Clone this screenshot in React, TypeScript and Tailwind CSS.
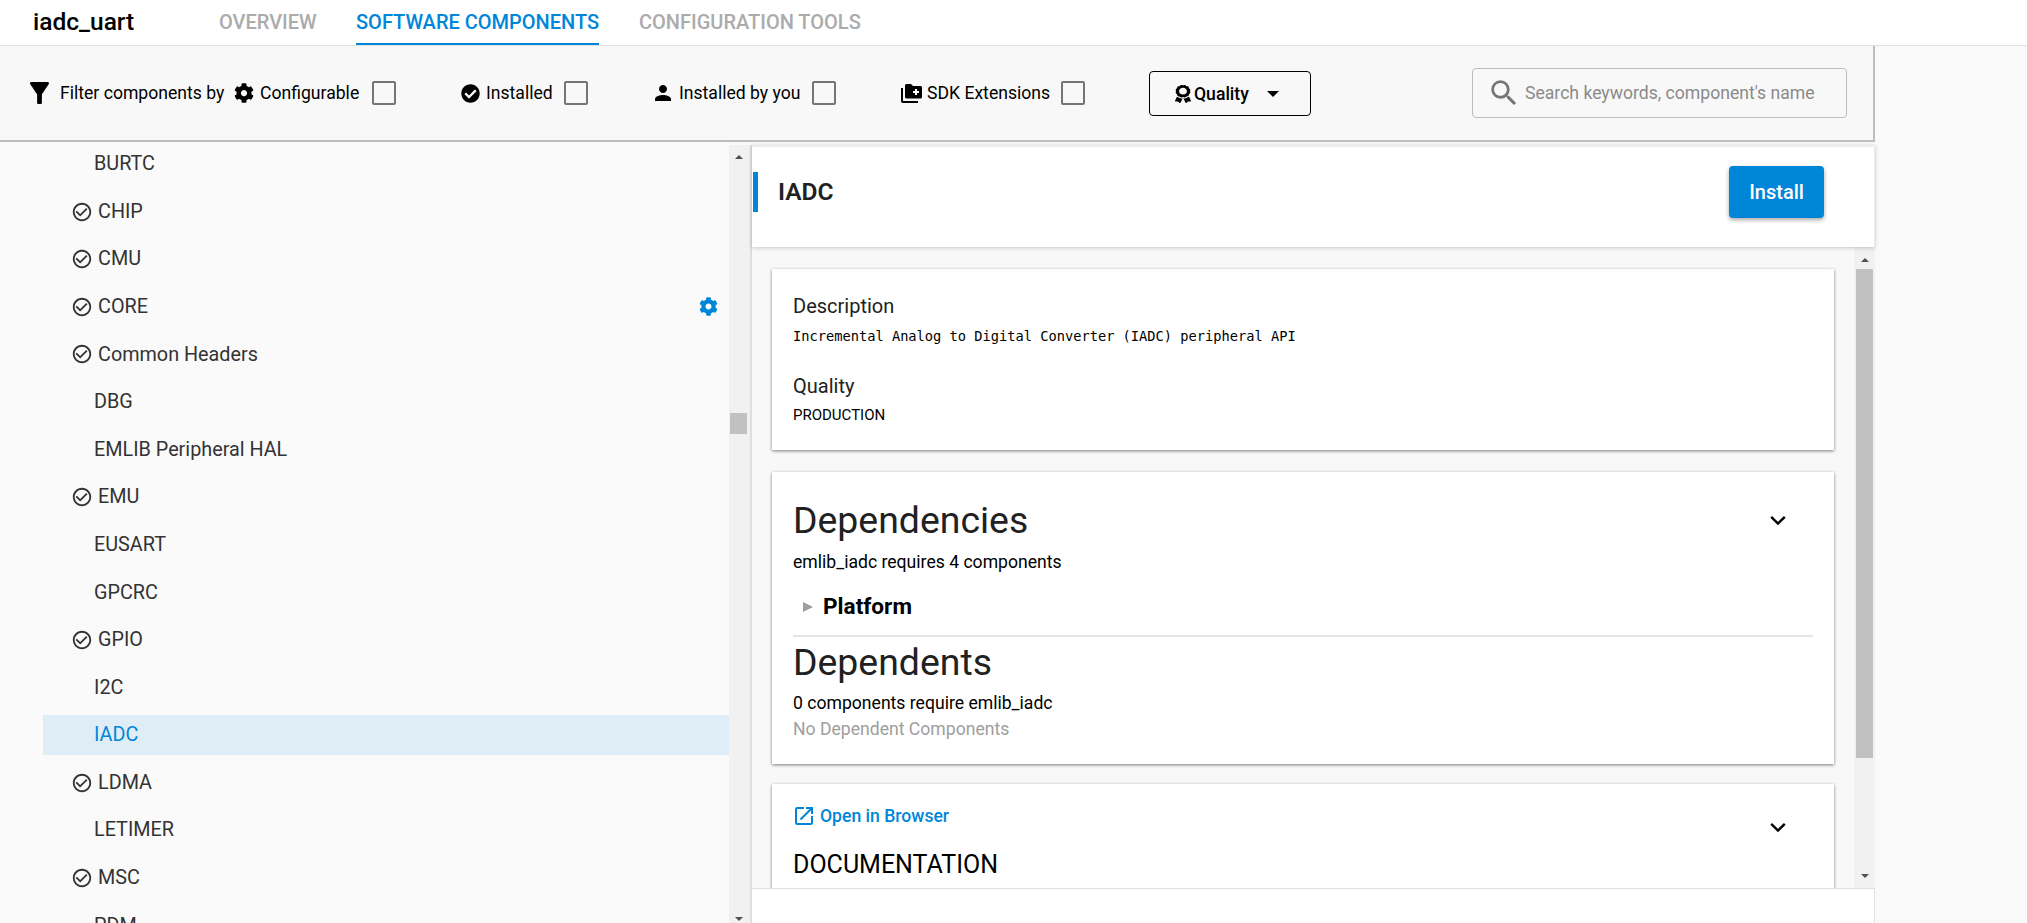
import React from "react";
import { MdPerson, MdSearch, MdCheckCircleOutline, MdOpenInNew } from "react-icons/md";
import { FaCog, FaCheckCircle, FaAward } from "react-icons/fa";

const rows: { name: string; check?: boolean; gear?: boolean; active?: boolean }[] = [
  { name: "BURTC" },
  { name: "CHIP", check: true },
  { name: "CMU", check: true },
  { name: "CORE", check: true, gear: true },
  { name: "Common Headers", check: true },
  { name: "DBG" },
  { name: "EMLIB Peripheral HAL" },
  { name: "EMU", check: true },
  { name: "EUSART" },
  { name: "GPCRC" },
  { name: "GPIO", check: true },
  { name: "I2C" },
  { name: "IADC", active: true },
  { name: "LDMA", check: true },
  { name: "LETIMER" },
  { name: "MSC", check: true },
  { name: "PDM" },
];

function Box() {
  return <span className="block w-[24px] h-[24px] border-2 border-[#757575] rounded-[2px] shrink-0" />;
}

function ArrowUp() {
  return <span className="block w-0 h-0 border-x-[4.5px] border-x-transparent border-b-[4px] border-b-[#505050]" />;
}
function ArrowDown() {
  return <span className="block w-0 h-0 border-x-[4.5px] border-x-transparent border-t-[4px] border-t-[#505050]" />;
}

function Funnel() {
  return (
    <svg viewBox="4 4 16 16" preserveAspectRatio="none" className="w-[19px] h-[22px] shrink-0" fill="currentColor">
      <path d="M4.25 5.61C6.27 8.2 10 13 10 13v6c0 .55.45 1 1 1h2c.55 0 1-.45 1-1v-6s3.72-4.8 5.74-7.39c.51-.66.04-1.61-.79-1.61H5.04c-.83 0-1.3.95-.79 1.61z" />
    </svg>
  );
}

function SdkFolder() {
  return (
    <svg viewBox="0 0 21 19" className="w-[21px] h-[19px] shrink-0">
      <path d="M1 4v13.2c0 .5.3.8.8.8H17" fill="none" stroke="black" strokeWidth="2" />
      <path d="M5.5 0H10l2 2h7.5c.8 0 1.5.7 1.5 1.5V13c0 .8-.7 1.5-1.5 1.5h-14C4.700 14.500 4 13.800 4 13V1.500C4 .7 4.700 0 5.500 0z" fill="black" />
      <path d="M14 5h2v2h2v2h-2v2h-2V9h-2V7h2z" fill="white" />
    </svg>
  );
}

function Chevron({ className }: { className: string }) {
  return (
    <svg viewBox="0 0 16 11" className={`w-[16px] h-[11px] text-black ${className}`} fill="none" stroke="currentColor" strokeWidth="2.400">
      <path d="M1.200 1.800 8 8.500l6.800-6.700" />
    </svg>
  );
}

export default function App() {
  return (
    <div className="w-[2027px] h-[923px] overflow-hidden flex flex-col bg-[#f9f9f9] text-[#212121] font-['Roboto',sans-serif]">
      <header className="h-[46px] shrink-0 bg-white border-b border-[#e0e0e0] flex items-stretch">
        <div className="w-[219px] pl-[33px] pt-[8px] text-[24.5px] leading-[28px] font-medium text-black">iadc_uart</div>
        <div className="w-[137px] pt-[12px] text-[20px] leading-[20px] font-medium text-[#ababab]">OVERVIEW</div>
        <div className="w-[243px] h-[45px] pt-[12px] text-[20px] leading-[20px] font-medium text-[#0086d9] border-b-2 border-[#0086d9] whitespace-nowrap">SOFTWARE COMPONENTS</div>
        <div className="ml-[40px] pt-[12px] text-[20px] leading-[20px] font-medium text-[#ababab]">CONFIGURATION TOOLS</div>
      </header>

      <div className="flex-1 min-h-0 flex">
        <div className="w-[1875px] shrink-0 flex flex-col min-h-0">
          <div className="h-[96px] shrink-0 bg-[#f8f8f8] border-r-2 border-b-2 border-[#bdbdbd] flex items-center text-[17.6px] leading-[20px] text-black pl-[30px] whitespace-nowrap">
            <Funnel />
            <span className="ml-[11px] w-[164px]">Filter components by</span>
            <FaCog className="ml-[10px] w-[20px] h-[20px] shrink-0" />
            <span className="ml-[6px] w-[100px]">Configurable</span>
            <span className="ml-[12px]"><Box /></span>
            <FaCheckCircle className="ml-[65px] w-[19px] h-[19px] shrink-0" />
            <span className="ml-[6px] w-[67px]">Installed</span>
            <span className="ml-[11px]"><Box /></span>
            <MdPerson className="ml-[63px] w-[24px] h-[24px] shrink-0" />
            <span className="ml-[4px] w-[122px]">Installed by you</span>
            <span className="ml-[11px]"><Box /></span>
            <span className="ml-[65px]"><SdkFolder /></span>
            <span className="ml-[5px] w-[122px]">SDK Extensions</span>
            <span className="ml-[12px]"><Box /></span>
            <button className="ml-[64px] w-[162px] h-[45px] mt-[1px] border border-black rounded-[4px] flex items-center pl-[25px] font-medium text-[17.6px] text-black shrink-0">
              <FaAward preserveAspectRatio="none" className="w-[16px] h-[18px] shrink-0" />
              <span className="ml-[3px]">Quality</span>
              <span className="ml-[18px] block w-0 h-0 border-x-[6.5px] border-x-transparent border-t-[6px] border-t-black" />
            </button>
            <div className="ml-[161px] w-[375px] h-[50px] border border-[#bdbdbd] rounded-[4px] flex items-center pl-[14px] text-[17.6px] text-[#8a8a8a] shrink-0">
              <MdSearch className="w-[34px] h-[34px] text-[#757575] shrink-0" />
              <span className="ml-[4px]">Search keywords, component's name</span>
            </div>
          </div>

          <div className="flex-1 min-h-0 flex">
            <div className="w-[729px] shrink-0 bg-[#fafafa] overflow-hidden pt-[2px] pl-[43px] flex flex-col gap-[7.6px] text-[19.8px] text-[#333333]">
              {rows.map((r) => (
                <div key={r.name} className={`h-[40px] shrink-0 flex items-center ${r.active ? "bg-[#dfeef6] text-[#0086d9]" : ""}`}>
                  {r.check ? (
                    <>
                      <MdCheckCircleOutline className="ml-[28px] w-[22px] h-[22px] shrink-0" />
                      <span className="ml-[5px]">{r.name}</span>
                    </>
                  ) : (
                    <span className="ml-[51px]">{r.name}</span>
                  )}
                  {r.gear && <FaCog className="ml-auto mr-[11px] w-[19px] h-[19px] text-[#0086d9]" />}
                </div>
              ))}
            </div>
            <div className="w-[23px] shrink-0 mt-[3px] bg-[#f1f1f1] border-r-2 border-[#dedede] flex flex-col items-center pt-[10px] pr-[2px]">
              <ArrowUp />
              <div className="mt-[254px] w-[17px] h-[21px] bg-[#c1c1c1]" />
              <div className="mt-auto mb-[2px]"><ArrowDown /></div>
            </div>

            <div className="flex-1 min-w-0 flex flex-col min-h-0 pt-[3px]">
              <div className="h-[102px] shrink-0 bg-white border-t-2 border-r border-[#ececec] shadow-[0_1px_4px_rgba(0,0,0,0.2)] relative z-10 flex pl-px">
                <div className="w-[5px] h-[40px] mt-[25px] bg-[#0086d9]" />
                <div className="ml-[20px] mt-[29px] text-[24.5px] leading-[32px] font-semibold text-[#212121]">IADC</div>
                <button className="ml-auto mr-[50px] mt-[19px] w-[95px] h-[52px] rounded-[4px] bg-[#0086d9] text-white text-[20px] font-medium shadow-[0_2px_4px_rgba(0,0,0,0.35)]">Install</button>
              </div>

              <div className="flex-1 min-h-0 flex bg-[#f8f8f8]">
                <div className="flex-1 min-w-0 overflow-hidden pt-[22px] pl-[20px] pr-[20px] flex flex-col">
                  <section className="h-[181px] shrink-0 bg-white shadow-[0_1px_3px_rgba(0,0,0,0.5)] pl-[21px] pt-[25px]">
                    <div className="text-[20px] leading-[24px] text-[#212121]">Description</div>
                    <div className="mt-[8px] text-[13.7px] leading-[20px] text-black font-['DejaVu_Sans_Mono',monospace]">Incremental Analog to Digital Converter (IADC) peripheral API</div>
                    <div className="mt-[28px] text-[20px] leading-[24px] text-[#212121]">Quality</div>
                    <div className="mt-[7px] text-[15px] leading-[20px] text-black">PRODUCTION</div>
                  </section>

                  <section className="mt-[22px] h-[292px] shrink-0 bg-white shadow-[0_1px_3px_rgba(0,0,0,0.5)] px-[21px] pt-[25px] relative">
                    <div className="text-[37.4px] leading-[46px] text-[#212121]">Dependencies</div>
                    <Chevron className="absolute right-[48px] top-[43px]" />
                    <div className="mt-[8px] text-[17.6px] leading-[22px] text-black">emlib_iadc requires 4 components</div>
                    <div className="mt-[17px] ml-[10px] flex items-center h-[33px]">
                      <span className="block w-0 h-0 border-y-[5px] border-y-transparent border-l-[10px] border-l-[#9e9e9e]" />
                      <span className="ml-[10px] text-[22.6px] font-bold text-black">Platform</span>
                    </div>
                    <div className="mt-[12px] h-[2px] bg-[#e4e4e4]" />
                    <div className="mt-[2px] text-[37.4px] leading-[46px] text-[#212121]">Dependents</div>
                    <div className="mt-[7px] text-[17.6px] leading-[22px] text-black">0 components require emlib_iadc</div>
                    <div className="mt-[4px] text-[17.6px] leading-[22px] text-[#9e9e9e]">No Dependent Components</div>
                  </section>

                  <section className="mt-[20px] h-[200px] shrink-0 bg-white shadow-[0_1px_3px_rgba(0,0,0,0.5)] px-[21px] pt-[20px] relative">
                    <div className="flex items-center h-[24px] text-[#0086d9] text-[17.6px] font-medium">
                      <MdOpenInNew className="w-[24px] h-[24px] shrink-0 -ml-[1px]" />
                      <span className="ml-[4px]">Open in Browser</span>
                    </div>
                    <Chevron className="absolute right-[48px] top-[38px]" />
                    <div className="mt-[21px] text-[25px] leading-[32px] text-black">DOCUMENTATION</div>
                  </section>
                </div>
                <div className="w-[21px] shrink-0 bg-[#f1f1f1] flex flex-col items-center pt-[11px]">
                  <ArrowUp />
                  <div className="mt-[7px] w-[17px] h-[489px] bg-[#c1c1c1]" />
                  <div className="mt-auto mb-[10px]"><ArrowDown /></div>
                </div>
              </div>

              <div className="h-[35px] shrink-0 bg-white border-t border-r border-[#e0e0e0] relative z-10" />
            </div>
          </div>
        </div>
        <div className="flex-1 bg-[#f9f9f9]" />
      </div>
    </div>
  );
}
